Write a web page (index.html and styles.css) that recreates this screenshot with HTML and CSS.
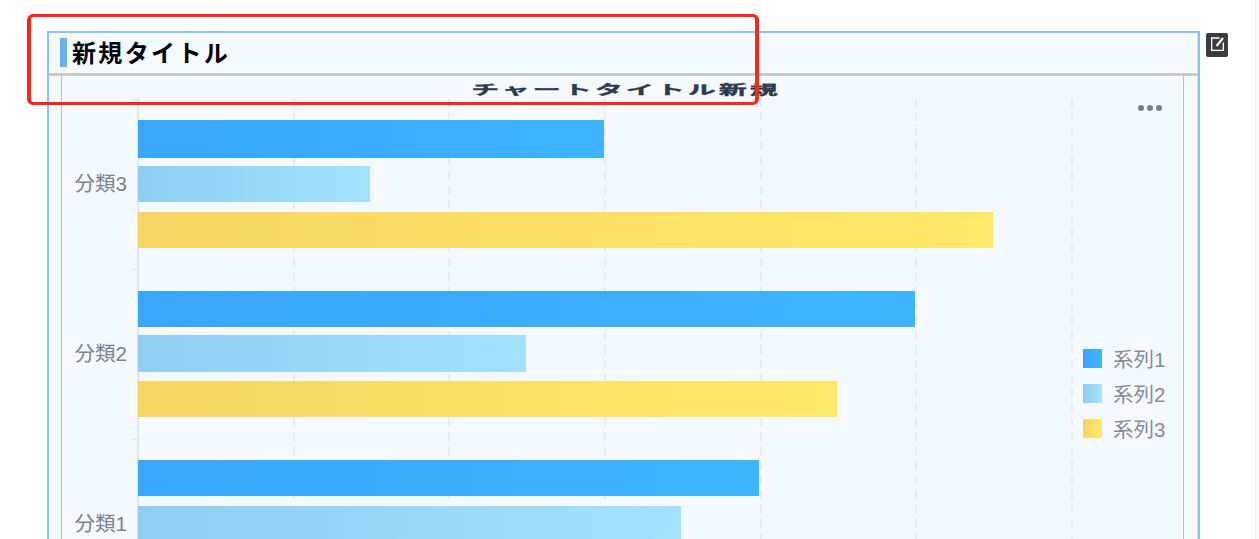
FILE: index.html
```html
<!DOCTYPE html>
<html lang="ja">
<head>
<meta charset="utf-8">
<title>新規タイトル</title>
<link rel="stylesheet" href="styles.css">
</head>
<body>
<div class="page">
  <main class="main">
    <section class="panel">
      <header class="panel-head">
        <span class="accent"></span>
        <h1 class="panel-title">新規タイトル</h1>
      </header>
      <div class="chart">
        <div class="chart-title"><span class="chart-title-text">チャートタイトル新規</span></div>
        <div class="more"><i></i><i></i><i></i></div>
        <div class="chart-body">
          <div class="labels">
            <div class="label">分類3</div>
            <div class="label">分類2</div>
            <div class="label">分類1</div>
          </div>
          <div class="plot">
            <div class="grid">
              <div class="cell"></div><div class="cell"></div><div class="cell"></div>
              <div class="cell"></div><div class="cell"></div><div class="cell"></div>
            </div>
            <div class="row row-a">
              <div class="bar blue h38" style="width:466px"></div>
              <div class="bar sky h36 g8" style="width:232px"></div>
              <div class="bar gold h36 g10" style="width:855px"></div>
            </div>
            <div class="row row-b">
              <div class="bar blue h36" style="width:777px"></div>
              <div class="bar sky h37 g8" style="width:388px"></div>
              <div class="bar gold h36 g9" style="width:699px"></div>
            </div>
            <div class="row row-a">
              <div class="bar blue h36" style="width:621px"></div>
              <div class="bar sky h36 g10" style="width:543px"></div>
            </div>
          </div>
        </div>
        <ul class="legend">
          <li class="legend-item"><span class="swatch blue"></span><span class="legend-text">系列1</span></li>
          <li class="legend-item"><span class="swatch sky"></span><span class="legend-text">系列2</span></li>
          <li class="legend-item"><span class="swatch gold"></span><span class="legend-text">系列3</span></li>
        </ul>
      </div>
    </section>
    <button class="edit" type="button" aria-label="編集">
      <svg viewBox="0 0 22 24" width="22" height="24" fill="none" stroke="#fff">
        <path d="M13.5 5H5.7v12.4H17.3V9.5" stroke-width="1.3"/>
        <path d="M10.5 13 17 5" stroke-width="2.2"/>
      </svg>
    </button>
  </main>
  <aside class="edge"></aside>
</div>
<div class="annotation"></div>
</body>
</html>
```
FILE: styles.css
```css
* { box-sizing: border-box; }
html, body { margin: 0; height: 539px; overflow: hidden; background: #fff; }
body { font-family: "Liberation Sans", "Noto Sans CJK JP", sans-serif; position: relative; }

.page { display: flex; height: 539px; }
.main { flex: 1; display: flex; align-items: flex-start; gap: 6px; padding: 31px 0 0 47px; min-width: 0; }
.edge { width: 4px; background: #f8f8f4; border-left: 1px solid #efefea; }

.panel { width: 1153px; height: 700px; flex: none; background: #f4f9fe; border: 2px solid #8bc0f7; box-shadow: inset -1px 0 0 #dcdfe3; }
.panel-head { height: 43px; display: flex; align-items: flex-start; padding: 5px 0 0 11px; border-bottom: 3px solid #c8c9cb; }
.accent { width: 7px; height: 29px; background: #66b3ee; flex: none; }
.panel-title { margin: 1px 0 0 5px; font-size: 24px; line-height: 30px; font-weight: 700; letter-spacing: 2.35px; color: #000; }

.chart { position: relative; width: 1123px; height: 650px; margin-left: 12px; border-left: 1px solid #bcbfc4; border-right: 1px solid #bcbfc4; padding-top: 8px; }
.chart-title { height: 11px; margin-bottom: 4px; padding-left: 7px; text-align: center; font-size: 28px; line-height: 11px; font-weight: 700; letter-spacing: 3px; color: #2c3a4c; white-space: nowrap; }
.chart-title-text { display: inline-block; transform: scaleY(.46); -webkit-text-stroke: .7px #2c3a4c; }

.more { position: absolute; top: 29px; right: 21px; display: flex; gap: 3px; }
.more i { width: 6px; height: 6px; border-radius: 50%; background: #7b7f85; }

.chart-body { display: flex; }
.labels { width: 76px; flex: none; }
.label { height: 170px; display: flex; align-items: center; justify-content: flex-end; padding: 0 11px 5px 0; font-size: 20.5px; color: #78838f; }

.plot { position: relative; flex: 1; }
.plot::before { content: ""; position: absolute; left: -1px; top: 0; bottom: 0; width: 2px; background: #e0e6f1; }
.grid { position: absolute; inset: 0 auto 0 0; display: flex; }
.cell { width: 155.6px; position: relative; }
.cell::after { content: ""; position: absolute; right: -1.2px; top: 0; bottom: 0; width: 2px; background: repeating-linear-gradient(to bottom, #e8ecf2 0 8px, transparent 8px 14.5px); }

.row { position: relative; height: 170px; }
.row::before { content: ""; position: absolute; left: -6px; top: 0; width: 5px; height: 1px; background: #e0e6f1; }
.row-a { padding-top: 21px; }
.row-b { padding-top: 22px; }

.bar { position: relative; }
.h36 { height: 36px; }
.h37 { height: 37px; }
.h38 { height: 38px; }
.g8 { margin-top: 8px; }
.g9 { margin-top: 9px; }
.g10 { margin-top: 10px; }

.blue { background: linear-gradient(to right, #38a6fa, #3eb4ff); }
.sky { background: linear-gradient(to right, #90cdf3, #a2e2ff); }
.gold { background: linear-gradient(to right, #f7d564, #ffe967); }

.legend { position: absolute; left: 1021px; top: 273px; margin: 0; padding: 0; list-style: none; display: flex; flex-direction: column; gap: 16px; }
.legend-item { display: flex; align-items: center; gap: 11px; height: 19px; font-size: 20.5px; color: #848c96; white-space: nowrap; }
.legend-text { margin-top: -2px; }
.swatch { width: 19px; height: 19px; flex: none; }

.edit { flex: none; width: 22px; height: 24px; margin-top: 2px; padding: 0; border: 0; border-radius: 2px; background: #3a3d40; display: block; }
.edit svg { display: block; }

.annotation { position: absolute; left: 27px; top: 14px; width: 732px; height: 91px; border: solid #ff2318; border-width: 3px 4px; border-radius: 6px; pointer-events: none; }
```
